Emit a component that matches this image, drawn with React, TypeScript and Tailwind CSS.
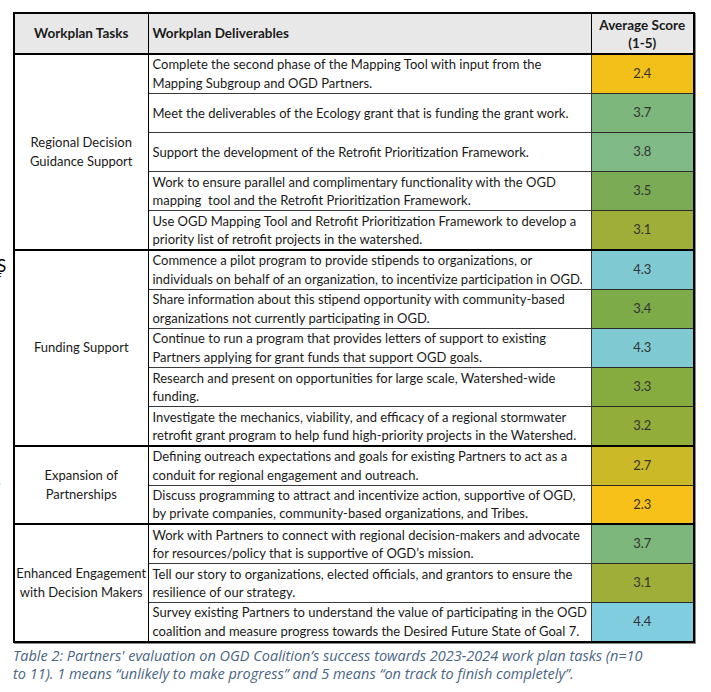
import React from "react"

type Item = { lines: string[]; score: string; color: string }
type Section = { task: string[]; items: Item[] }

const SECTIONS: Section[] = [
  {
    task: ["Regional Decision", "Guidance Support"],
    items: [
      {
        lines: ["Complete the second phase of the Mapping Tool with input from the", "Mapping Subgroup and OGD Partners."],
        score: "2.4",
        color: "bg-[#f2c018]",
      },
      {
        lines: ["Meet the deliverables of the Ecology grant that is funding the grant work."],
        score: "3.7",
        color: "bg-[#7db77b]",
      },
      {
        lines: ["Support the development of the Retrofit Prioritization Framework."],
        score: "3.8",
        color: "bg-[#80ba86]",
      },
      {
        lines: ["Work to ensure parallel and complimentary functionality with the OGD", "mapping  tool and the Retrofit Prioritization Framework."],
        score: "3.5",
        color: "bg-[#7bab55]",
      },
      {
        lines: ["Use OGD Mapping Tool and Retrofit Prioritization Framework to develop a", "priority list of retrofit projects in the watershed."],
        score: "3.1",
        color: "bg-[#9fae38]",
      },
    ],
  },
  {
    task: ["Funding Support"],
    items: [
      {
        lines: ["Commence a pilot program to provide stipends to organizations, or", "individuals on behalf of an organization, to incentivize participation in OGD."],
        score: "4.3",
        color: "bg-[#7fcad2]",
      },
      {
        lines: ["Share information about this stipend opportunity with community-based", "organizations not currently participating in OGD."],
        score: "3.4",
        color: "bg-[#7dab48]",
      },
      {
        lines: ["Continue to run a program that provides letters of support to existing", "Partners applying for grant funds that support OGD goals."],
        score: "4.3",
        color: "bg-[#7fcad2]",
      },
      {
        lines: ["Research and present on opportunities for large scale, Watershed-wide", "funding."],
        score: "3.3",
        color: "bg-[#86ac40]",
      },
      {
        lines: ["Investigate the mechanics, viability, and efficacy of a regional stormwater", "retrofit grant program to help fund high-priority projects in the Watershed."],
        score: "3.2",
        color: "bg-[#93ad3a]",
      },
    ],
  },
  {
    task: ["Expansion of", "Partnerships"],
    items: [
      {
        lines: ["Defining outreach expectations and goals for existing Partners to act as a", "conduit for regional engagement and outreach."],
        score: "2.7",
        color: "bg-[#cbb928]",
      },
      {
        lines: ["Discuss programming to attract and incentivize action, supportive of OGD,", "by private companies, community-based organizations, and Tribes."],
        score: "2.3",
        color: "bg-[#f7c11a]",
      },
    ],
  },
  {
    task: ["Enhanced Engagement", "with Decision Makers"],
    items: [
      {
        lines: ["Work with Partners to connect with regional decision-makers and advocate", "for resources/policy that is supportive of OGD’s mission."],
        score: "3.7",
        color: "bg-[#7db77b]",
      },
      {
        lines: ["Tell our story to organizations, elected officials, and grantors to ensure the", "resilience of our strategy."],
        score: "3.1",
        color: "bg-[#9fae38]",
      },
      {
        lines: ["Survey existing Partners to understand the value of participating in the OGD", "coalition and measure progress towards the Desired Future State of Goal 7."],
        score: "4.4",
        color: "bg-[#81cde0]",
      },
    ],
  },
]

export default function App() {
  return (
    <div className="w-[711px] h-[692px] bg-white flex text-[#1a1a1a]" style={{ fontFamily: "Lato, 'Liberation Sans', sans-serif" }}>
      {/* clipped text from neighbouring page */}
      <div className="w-[13px] overflow-hidden flex flex-col leading-none text-black">
        <span className="mt-[257px] -ml-[3px] text-[17px]">S</span>
        <span className="-mt-[3px] -ml-[5px] text-[12px]">F</span>
        <span className="mt-[190px] -ml-[6px] text-[15px]">s</span>
      </div>

      <div className="flex flex-col pt-[12px]">
        <table className="border-collapse table-fixed w-[680px] border-2 border-black shadow-[1px_1px_0_#8a8a8a] text-[13px]">
          <colgroup>
            <col className="w-[134px]" />
            <col className="w-[443px]" />
            <col className="w-[103px]" />
          </colgroup>
          <thead>
            <tr className="h-[41px] bg-[#e8e8e8] text-[13.5px]">
              <th className="border border-black border-b-2 text-center font-bold">Workplan Tasks</th>
              <th className="border border-black border-b-2 text-left pl-[4px] font-bold">Workplan Deliverables</th>
              <th className="border border-black border-b-2 text-center font-bold leading-[18px]">
                Average Score
                <br />
                (1-5)
              </th>
            </tr>
          </thead>
          <tbody>
            {SECTIONS.map((sec, si) =>
              sec.items.map((it, i) => (
                <tr key={si + "-" + i} className="h-[39.2px]">
                  {i === 0 && (
                    <td
                      rowSpan={sec.items.length}
                      className="border border-black border-t-2 text-center align-middle leading-[19px]"
                    >
                      {sec.task.map((t) => (
                        <div key={t}>{t}</div>
                      ))}
                    </td>
                  )}
                  <td
                    className={
                      i === 0
                        ? "border border-[#3a3a3a] border-t-2 border-t-black pl-[4px] leading-[18.5px] whitespace-pre align-middle"
                        : "border border-[#3a3a3a] pl-[4px] leading-[18.5px] whitespace-pre align-middle"
                    }
                  >
                    {it.lines.map((l) => (
                      <div key={l}>{l}</div>
                    ))}
                  </td>
                  <td
                    className={
                      i === 0
                        ? `border border-[#2a2a2a] border-t-2 border-t-black text-center align-middle text-[#333] ${it.color}`
                        : `border border-[#2a2a2a] text-center align-middle text-[#333] ${it.color}`
                    }
                  >
                    {it.score}
                  </td>
                </tr>
              ))
            )}
          </tbody>
        </table>

        <p
          className="mt-[4px] italic text-[14.5px] leading-[18px] text-[#4a6583]"
          style={{ fontFamily: "'Open Sans', sans-serif" }}
        >
          Table 2: Partners' evaluation on OGD Coalition’s success towards 2023-2024 work plan tasks (n=10
          <br />
          to 11). 1 means “unlikely to make progress” and 5 means “on track to finish completely”.
        </p>
      </div>
    </div>
  )
}
